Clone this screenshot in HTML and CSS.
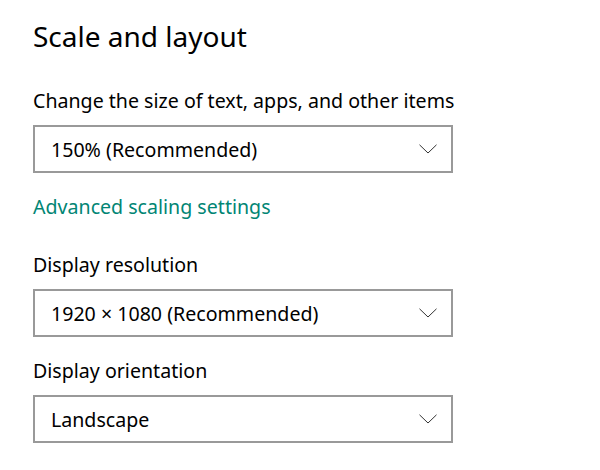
FILE: index.html
```html
<!DOCTYPE html>
<html>
<head>
<meta charset="utf-8">
<link rel="stylesheet" href="styles.css">
</head>
<body>
<main class="page">
  <h1 class="title">Scale and layout</h1>
  <section class="field field-first">
    <div class="label">Change the size of text, apps, and other items</div>
    <div class="select">
      <span class="value">150% (Recommended)</span>
      <svg class="chev" width="18" height="10" viewBox="0 0 18 10"><path d="M0.5 0.8 L9 9 L17.5 0.8" fill="none" stroke="#333" stroke-width="1"/></svg>
    </div>
  </section>
  <a class="link">Advanced scaling settings</a>
  <section class="field">
    <div class="label">Display resolution</div>
    <div class="select">
      <span class="value">1920 × 1080 (Recommended)</span>
      <svg class="chev" width="18" height="10" viewBox="0 0 18 10"><path d="M0.5 0.8 L9 9 L17.5 0.8" fill="none" stroke="#333" stroke-width="1"/></svg>
    </div>
  </section>
  <section class="field">
    <div class="label">Display orientation</div>
    <div class="select">
      <span class="value">Landscape</span>
      <svg class="chev" width="18" height="10" viewBox="0 0 18 10"><path d="M0.5 0.8 L9 9 L17.5 0.8" fill="none" stroke="#333" stroke-width="1"/></svg>
    </div>
  </section>
</main>
</body>
</html>
```
FILE: styles.css
```css
html, body {
  margin: 0;
  padding: 0;
  background: #ffffff;
}
body {
  font-family: "Noto Sans", "Open Sans", sans-serif;
  color: #000000;
}
.page {
  padding: 16px 0 0 33px;
  width: 420px;
}
.title {
  margin: 0;
  font-size: 28px;
  font-weight: 400;
  line-height: 40px;
  white-space: nowrap;
}
.field-first {
  margin-top: 32px;
}
.field {
  display: flex;
  flex-direction: column;
}
.label {
  font-size: 19.6px;
  line-height: 26px;
  margin-bottom: 11px;
  white-space: nowrap;
}
.select {
  box-sizing: border-box;
  height: 48px;
  width: 420px;
  border: 2px solid #999999;
  display: flex;
  align-items: center;
  justify-content: space-between;
  padding: 0 14px 0 16px;
}
.value {
  font-size: 19.6px;
  white-space: nowrap;
}
.chev {
  display: block;
}
.link {
  display: block;
  color: #018574;
  font-size: 19.6px;
  line-height: 26px;
  margin: 21px 0 32px;
  white-space: nowrap;
}
.field + .field {
  margin-top: 21px;
}
```
